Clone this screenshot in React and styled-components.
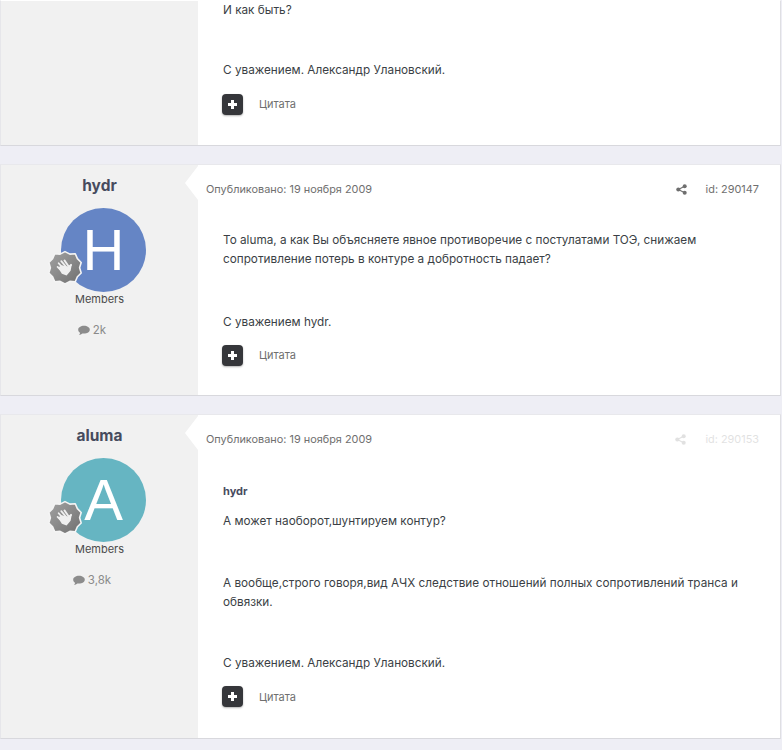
import React from "react";
import styled, { createGlobalStyle } from "styled-components";

const Global = createGlobalStyle`
  html, body { margin: 0; padding: 0; background: #eeeef5; }
  body { font-family: Inter, "Liberation Sans", sans-serif; color: #353c41; }
`;

const Page = styled.div`
  width: 782px;
  height: 750px;
  overflow: hidden;
  display: flex;
  flex-direction: column;
  gap: 18px;
`;

const Post = styled.article`
  display: flex;
  height: ${(p) => p.$height}px;
  flex: none;
  margin: 0 1px 0 0;
  background: #fff;
  border: 1px solid #e6e6ea;
  border-top-color: ${(p) => (p.$open ? "transparent" : "#e8e8ec")};
  border-right-color: #dfdfe3;
  border-bottom: 1px solid #d8d8dd;
  box-sizing: border-box;
`;

const Aside = styled.aside`
  position: relative;
  flex: none;
  width: 197px;
  background: #f1f1f1;
  display: flex;
  flex-direction: column;
  align-items: center;
  padding-top: 12px;
  box-sizing: border-box;
`;

const Notch = styled.span`
  position: absolute;
  right: 0;
  top: 1px;
  width: 0;
  height: 0;
  border-style: solid;
  border-width: 17px 13px 17px 0;
  border-color: transparent #fff transparent transparent;
`;

const Author = styled.h3`
  margin: 0;
  font-size: 15.5px;
  line-height: 18px;
  font-weight: 700;
  color: #474b5e;
`;

const AvatarWrap = styled.div`
  position: relative;
  width: 85px;
  height: 84px;
  margin: 13px 0 0 8px;
`;

const Avatar = styled.div`
  width: 85px;
  height: 84px;
  border-radius: 50%;
  background: ${(p) => p.$color};
  color: #fff;
  font-family: "Liberation Sans", Arial, sans-serif;
  font-size: 58px;
  line-height: 84px;
  text-align: center;
`;

const Badge = styled.svg`
  position: absolute;
  left: -14px;
  top: 42px;
  width: 36px;
  height: 36px;
`;

const Group = styled.div`
  margin-top: 0;
  font-size: 11px;
  line-height: 14px;
  color: #4a4a4a;
`;

const Count = styled.div`
  margin: 17px 15px 0 0;
  display: flex;
  align-items: center;
  gap: 3px;
  font-size: 11.5px;
  line-height: 14px;
  color: #8a8a8a;
`;

const Main = styled.div`
  flex: 1;
  min-width: 0;
  display: flex;
  flex-direction: column;
  background: #fff;
`;

const Meta = styled.div`
  display: flex;
  justify-content: space-between;
  align-items: center;
  height: 14px;
  margin-top: 17px;
  padding: 0 21px 0 8px;
  font-size: 10.9px;
  color: #6f6f6f;
`;

const MetaRight = styled.div`
  display: flex;
  align-items: center;
  gap: 19px;
  opacity: ${(p) => (p.$faded ? 0.2 : 1)};
`;

const Body = styled.div`
  margin-top: ${(p) => p.$top}px;
  padding: 0 30px 0 25px;
  font-size: 11.75px;
  line-height: 19.25px;
  color: #3b3f45;
`;

const Para = styled.p`
  margin: 0 0 ${(p) => p.$after}px;
`;

const Quoted = styled.div`
  font-weight: 700;
  color: #474b5e;
  margin-bottom: 11px;
  font-size: 11px;
`;

const Actions = styled.div`
  display: flex;
  align-items: center;
  gap: 16px;
  padding-left: 24px;
  margin-top: ${(p) => p.$top}px;
`;

const PlusButton = styled.button`
  width: 21px;
  height: 21px;
  padding: 0;
  border: 0;
  border-radius: 4px;
  background: #35363a;
  display: flex;
  align-items: center;
  justify-content: center;
  box-shadow: 0 1px 2px rgba(0, 0, 0, 0.3);
`;

const QuoteLink = styled.span`
  font-size: 11px;
  color: #6f6f6f;
`;

const ShareIcon = () => (
  <svg width="11" height="11" viewBox="0 0 12 12" fill="currentColor">
    <circle cx="9.5" cy="2.4" r="2.2" />
    <circle cx="2.5" cy="6" r="2.2" />
    <circle cx="9.5" cy="9.6" r="2.2" />
    <path d="M2.5 6 9.5 2.4M2.5 6l7 3.6" stroke="currentColor" strokeWidth="1.2" />
  </svg>
);

const CommentIcon = () => (
  <svg width="12" height="11" viewBox="0 0 12 11" fill="#8c8c8c">
    <path d="M6 .8c3.2 0 5.8 1.7 5.8 3.9S9.2 8.6 6 8.6c-.6 0-1.1 0-1.6-.2C3.500 9.300 2.300 9.900.9 10.100c.7-.7 1.100-1.500 1.200-2.300C.9 7 .2 5.900.2 4.700.2 2.500 2.800.8 6 .8z" />
  </svg>
);

const PlusIcon = () => (
  <svg width="11" height="11" viewBox="0 0 11 11" fill="#fff">
    <path d="M4 1h3v3h3v3H7v3H4V7H1V4h3z" />
  </svg>
);

const WaveBadge = () => (
  <Badge viewBox="0 0 34 34">
    <defs>
      <linearGradient id="badge-grad" x1="0" y1="0" x2="1" y2="1">
        <stop offset="0" stopColor="#a2a2a2" />
        <stop offset="1" stopColor="#707070" />
      </linearGradient>
    </defs>
    <path
      d="M17 1.500 21.600 3.900 26.700 3.500 28.700 8.200 32.300 11.800 30.800 16.700 32.300 21.700 28.700 25.300 26.700 30 21.600 29.600 17 32 12.400 29.600 7.300 30 5.300 25.300 1.700 21.700 3.200 16.700 1.700 11.800 5.300 8.200 7.300 3.500 12.400 3.900z"
      fill="url(#badge-grad)"
      stroke="#f4f4f4"
      strokeWidth="1.500"
      strokeLinejoin="round"
    />
    <g fill="none" stroke="#efefef" strokeWidth="1.700" strokeLinecap="round" strokeLinejoin="round">
      <path d="M11 12.500l5 5.500M13.500 10.500l5 6M16.500 9.800l4 5.700M10 16l4.500 4.500" />
      <path d="M20.500 16.500l2.200-2.500" />
    </g>
    <path
      d="M10.500 16.500 14 14.500 19 15.500 23.500 13.500 22.300 19.500 18.500 24 14 22.500z"
      fill="#efefef"
    />
  </Badge>
);

const Sidebar = ({ name, letter, color, count }) => (
  <Aside>
    <Notch />
    <Author>{name}</Author>
    <AvatarWrap>
      <Avatar $color={color}>{letter}</Avatar>
      <WaveBadge />
    </AvatarWrap>
    <Group>Members</Group>
    <Count>
      <CommentIcon />
      {count}
    </Count>
  </Aside>
);

const PostMeta = ({ id, faded }) => (
  <Meta>
    <span>Опубликовано: 19 ноября 2009</span>
    <MetaRight $faded={faded}>
      <ShareIcon />
      <span>id: {id}</span>
    </MetaRight>
  </Meta>
);

const PostActions = ({ top }) => (
  <Actions $top={top}>
    <PlusButton aria-label="Добавить">
      <PlusIcon />
    </PlusButton>
    <QuoteLink>Цитата</QuoteLink>
  </Actions>
);

export default function App() {
  return (
    <Page>
      <Global />
      <Post $height={146} $open>
        <Aside />
        <Main>
          <Body $top={0}>
            <Para $after={41}>И как быть?</Para>
            <Para $after={0}>С уважением. Александр Улановский.</Para>
          </Body>
          <PostActions top={13} />
        </Main>
      </Post>
      <Post $height={232}>
        <Sidebar name="hydr" letter="H" color="#6585c5" count="2k" />
        <Main>
          <PostMeta id="290147" />
          <Body $top={35}>
            <Para $after={43}>
              То aluma, а как Вы объясняете явное противоречие с постулатами ТОЭ, снижаем сопротивление потерь в контуре а добротность падает?
            </Para>
            <Para $after={0}>С уважением hydr.</Para>
          </Body>
          <PostActions top={13} />
        </Main>
      </Post>
      <Post $height={325}>
        <Sidebar name="aluma" letter="A" color="#66b5c2" count="3,8k" />
        <Main>
          <PostMeta id="290153" faded />
          <Body $top={36}>
            <Quoted>hydr</Quoted>
            <Para $after={42}>А может наоборот,шунтируем контур?</Para>
            <Para $after={42}>
              А вообще,строго говоря,вид АЧХ следствие отношений полных сопротивлений транса и обвязки.
            </Para>
            <Para $after={0}>С уважением. Александр Улановский.</Para>
          </Body>
          <PostActions top={13} />
        </Main>
      </Post>
    </Page>
  );
}
